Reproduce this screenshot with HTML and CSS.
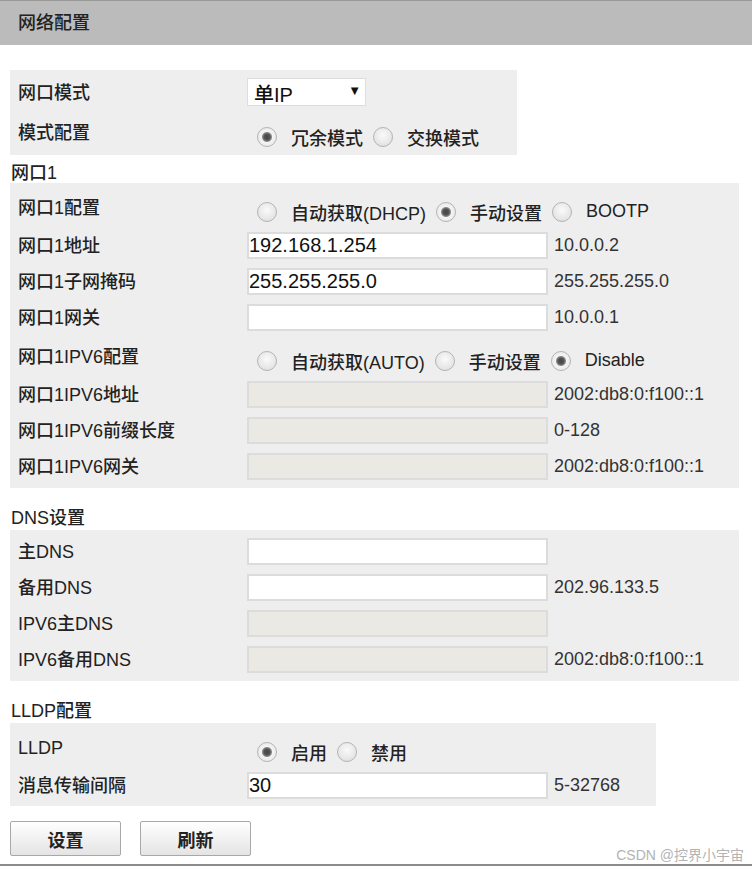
FILE: index.html
```html
<!DOCTYPE html>
<html lang="zh-CN">
<head>
    <meta charset="UTF-8">
    <meta name="viewport" content="width=device-width, initial-scale=1.0">
    <title>网络配置</title>
    <link rel="stylesheet" href="styles.css">
</head>
<body>
    <div class="page-title">网络配置</div>

    <div class="content">
        <div class="panel panel-mode">
            <div class="row row-select">
                <span class="label">网口模式</span>
                <div class="select"><span>单IP</span><span class="arrow">&#9660;</span></div>
            </div>
            <div class="row row-radio">
                <span class="label">模式配置</span>
                <div class="radios">
                    <label><input type="radio" name="mode" checked><span>冗余模式</span></label>
                    <label><input type="radio" name="mode"><span>交换模式</span></label>
                </div>
            </div>
        </div>

        <div class="section-title">网口1</div>
        <div class="panel">
            <div class="row row-radio">
                <span class="label">网口1配置</span>
                <div class="radios">
                    <label><input type="radio" name="ip4"><span>自动获取(DHCP)</span></label>
                    <label><input type="radio" name="ip4" checked><span>手动设置</span></label>
                    <label><input type="radio" name="ip4"><span>BOOTP</span></label>
                </div>
            </div>
            <div class="row">
                <span class="label">网口1地址</span>
                <input type="text" value="192.168.1.254">
                <span class="hint">10.0.0.2</span>
            </div>
            <div class="row">
                <span class="label">网口1子网掩码</span>
                <input type="text" value="255.255.255.0">
                <span class="hint">255.255.255.0</span>
            </div>
            <div class="row">
                <span class="label">网口1网关</span>
                <input type="text" value="">
                <span class="hint">10.0.0.1</span>
            </div>
            <div class="row row-radio">
                <span class="label">网口1IPV6配置</span>
                <div class="radios">
                    <label><input type="radio" name="ip6"><span>自动获取(AUTO)</span></label>
                    <label><input type="radio" name="ip6"><span>手动设置</span></label>
                    <label><input type="radio" name="ip6" checked><span>Disable</span></label>
                </div>
            </div>
            <div class="row">
                <span class="label">网口1IPV6地址</span>
                <input type="text" disabled>
                <span class="hint">2002:db8:0:f100::1</span>
            </div>
            <div class="row">
                <span class="label">网口1IPV6前缀长度</span>
                <input type="text" disabled>
                <span class="hint">0-128</span>
            </div>
            <div class="row">
                <span class="label">网口1IPV6网关</span>
                <input type="text" disabled>
                <span class="hint">2002:db8:0:f100::1</span>
            </div>
        </div>

        <div class="section-title spaced">DNS设置</div>
        <div class="panel">
            <div class="row">
                <span class="label">主DNS</span>
                <input type="text" value="">
            </div>
            <div class="row">
                <span class="label">备用DNS</span>
                <input type="text" value="">
                <span class="hint">202.96.133.5</span>
            </div>
            <div class="row">
                <span class="label">IPV6主DNS</span>
                <input type="text" disabled>
            </div>
            <div class="row">
                <span class="label">IPV6备用DNS</span>
                <input type="text" disabled>
                <span class="hint">2002:db8:0:f100::1</span>
            </div>
        </div>

        <div class="section-title spaced">LLDP配置</div>
        <div class="panel panel-lldp">
            <div class="row row-radio">
                <span class="label">LLDP</span>
                <div class="radios">
                    <label><input type="radio" name="lldp" checked><span>启用</span></label>
                    <label><input type="radio" name="lldp"><span>禁用</span></label>
                </div>
            </div>
            <div class="row">
                <span class="label">消息传输间隔</span>
                <input type="text" value="30">
                <span class="hint">5-32768</span>
            </div>
        </div>
    </div>

    <div class="footer">
        <button class="btn">设置</button>
        <button class="btn">刷新</button>
        <span class="watermark">CSDN @控界小宇宙</span>
    </div>
</body>
</html>
```

FILE: styles.css
```css
body {
    margin: 0;
    font-family: "Liberation Sans", "Noto Sans CJK SC", sans-serif;
    font-size: 18px;
    font-weight: 500;
    color: #222;
    background-color: #fff;
}

.page-title {
    height: 44px;
    line-height: 44px;
    padding-left: 18px;
    border-top: 1px solid #999;
    border-bottom: 1px solid #fff;
    background-color: #bbb;
    color: #222;
}

.content {
    padding: 24px 10px 0 10px;
}

.panel {
    width: 729px;
    padding: 3px 0 4px 0;
    background-color: #eee;
}
.panel-mode {
    width: 507px;
    padding-bottom: 3px;
}
.panel-lldp {
    width: 646px;
    padding-bottom: 3px;
}

.section-title {
    padding: 8px 0 0 1px;
    height: 20px;
    line-height: 20px;
}
.section-title.spaced {
    padding-top: 20px;
    height: 22px;
}

.row {
    display: grid;
    grid-template-columns: 229px 301px auto;
    align-items: center;
    height: 36px;
    padding-left: 8px;
}
.row-radio {
    display: flex;
    height: 41px;
}
.row-select {
    height: 38px;
}

.label {
    padding-top: 2px;
    line-height: 20px;
}
.row-radio .label {
    width: 229px;
}

.row input[type="text"] {
    box-sizing: border-box;
    width: 301px;
    height: 27px;
    margin: 0;
    padding: 0;
    border: 2px solid #dcdcdc;
    background-color: #fff;
    font-family: "Liberation Sans", sans-serif;
    font-size: 20px;
    color: #111;
}
.row input[type="text"]:disabled {
    background-color: #eae9e4;
}

.hint {
    margin-left: 6px;
    color: #333;
}

.select {
    box-sizing: border-box;
    width: 119px;
    height: 28px;
    display: flex;
    justify-content: space-between;
    align-items: center;
    padding: 2px 4px 0 6px;
    border: 1px solid #ddd;
    background-color: #fff;
    font-size: 20px;
    color: #111;
}
.select .arrow {
    font-size: 13px;
    margin-top: -6px;
}

.radios {
    display: flex;
    align-items: center;
    padding-top: 10px;
}
.radios label {
    display: flex;
    align-items: center;
}
.radios input[type="radio"] {
    appearance: none;
    -webkit-appearance: none;
    box-sizing: border-box;
    width: 20px;
    height: 20px;
    margin: 0 14px 0 10px;
    border: 1px solid #b4b4b4;
    border-radius: 50%;
    background: radial-gradient(circle at 50% 40%, #fafafa 0%, #e6e6e6 65%, #d6d6d6 100%);
}
.radios input[type="radio"]:checked {
    background: radial-gradient(circle, #444 0, #555 3px, #8a8a8a 4.5px, #f4f4f4 5.5px, #e2e2e2 100%);
}

.footer {
    position: relative;
    display: flex;
    gap: 19px;
    padding: 15px 10px 8px 10px;
    border-bottom: 2px solid #8c8c8c;
}

.btn {
    width: 111px;
    height: 35px;
    padding: 0;
    border: 1px solid #a8a8a8;
    border-radius: 2px;
    background: linear-gradient(#ffffff, #e4e4e4);
    font-family: "Liberation Sans", "Noto Sans CJK SC", sans-serif;
    font-size: 18px;
    font-weight: bold;
    color: #222;
    cursor: pointer;
}

.watermark {
    position: absolute;
    right: 8px;
    bottom: 1px;
    font-size: 14px;
    font-weight: normal;
    line-height: 16px;
    color: #b3b3b3;
}
```
